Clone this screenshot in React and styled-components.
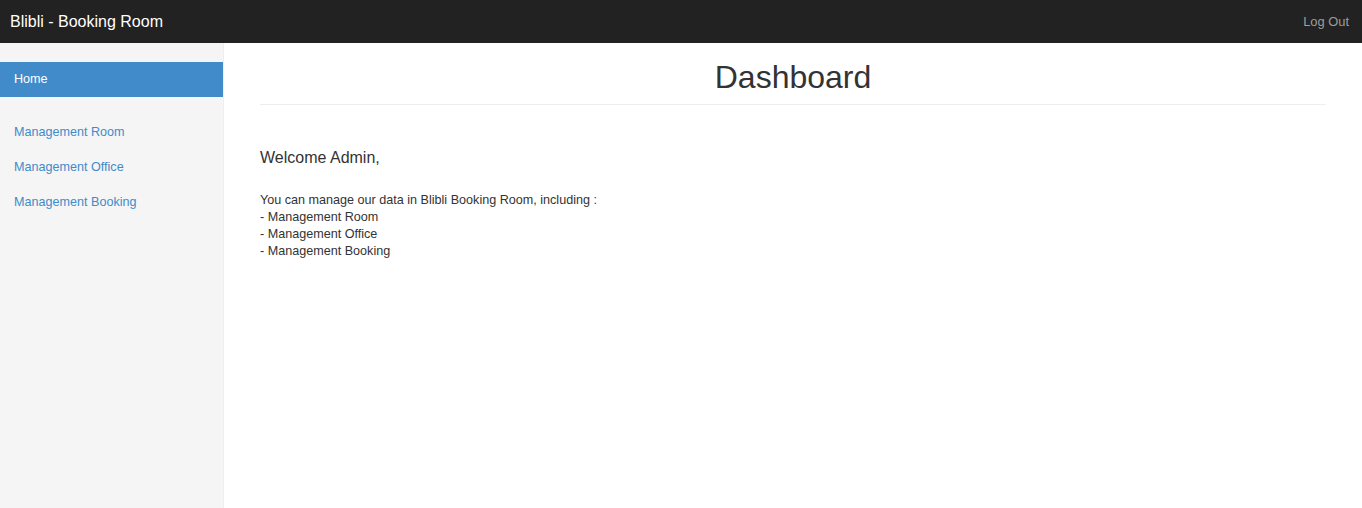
import React from 'react';
import styled, { createGlobalStyle } from 'styled-components';

const GlobalStyle = createGlobalStyle`
  html, body {
    margin: 0;
    padding: 0;
    background: #fff;
    font-family: "Liberation Sans", Arial, Helvetica, sans-serif;
    color: #333;
  }
  * {
    box-sizing: border-box;
  }
`;

const Navbar = styled.div`
  height: 43px;
  background: #222;
  display: flex;
  align-items: center;
  justify-content: space-between;
  padding: 0 13px 0 10px;
`;

const Brand = styled.a`
  color: #fff;
  font-size: 16px;
  text-decoration: none;
`;

const NavLink = styled.a`
  color: #9d9d9d;
  font-size: 12.9px;
  text-decoration: none;
`;

const Body = styled.div`
  display: flex;
  min-height: calc(100vh - 43px);
`;

const Sidebar = styled.div`
  width: 224px;
  flex-shrink: 0;
  background: #f5f5f5;
  border-right: 1px solid #eee;
  padding-top: 19px;
`;

const NavList = styled.ul`
  list-style: none;
  margin: 0 0 18px;
  padding: 0;
`;

const NavItem = styled.a`
  display: block;
  padding: 9px 14px;
  line-height: 17px;
  font-size: 12.6px;
  text-decoration: none;
  color: ${(p) => (p.$active ? '#fff' : '#428bca')};
  background: ${(p) => (p.$active ? '#428bca' : 'transparent')};
`;

const Main = styled.div`
  flex: 1;
  padding: 0 36px;
`;

const Title = styled.h1`
  margin: 17px 0 0;
  padding-bottom: 9px;
  font-size: 32px;
  font-weight: 500;
  line-height: 1.1;
  text-align: center;
  border-bottom: 1px solid #eee;
`;

const Welcome = styled.h4`
  margin: 44px 0 25px;
  font-size: 16px;
  font-weight: 500;
  line-height: 1.1;
`;

const Text = styled.p`
  margin: 0;
  font-size: 12.6px;
  line-height: 17px;
`;

const App = () => {
  return (
    <>
      <GlobalStyle />
      <Navbar>
        <Brand href="#">Blibli - Booking Room</Brand>
        <NavLink href="#">Log Out</NavLink>
      </Navbar>
      <Body>
        <Sidebar>
          <NavList>
            <li>
              <NavItem href="#" $active>
                Home
              </NavItem>
            </li>
          </NavList>
          <NavList>
            <li>
              <NavItem href="#">Management Room</NavItem>
            </li>
            <li>
              <NavItem href="#">Management Office</NavItem>
            </li>
            <li>
              <NavItem href="#">Management Booking</NavItem>
            </li>
          </NavList>
        </Sidebar>
        <Main>
          <Title>Dashboard</Title>
          <Welcome>Welcome Admin,</Welcome>
          <Text>
            You can manage our data in Blibli Booking Room, including :
            <br />- Management Room
            <br />- Management Office
            <br />- Management Booking
          </Text>
        </Main>
      </Body>
    </>
  );
};

export default App;
